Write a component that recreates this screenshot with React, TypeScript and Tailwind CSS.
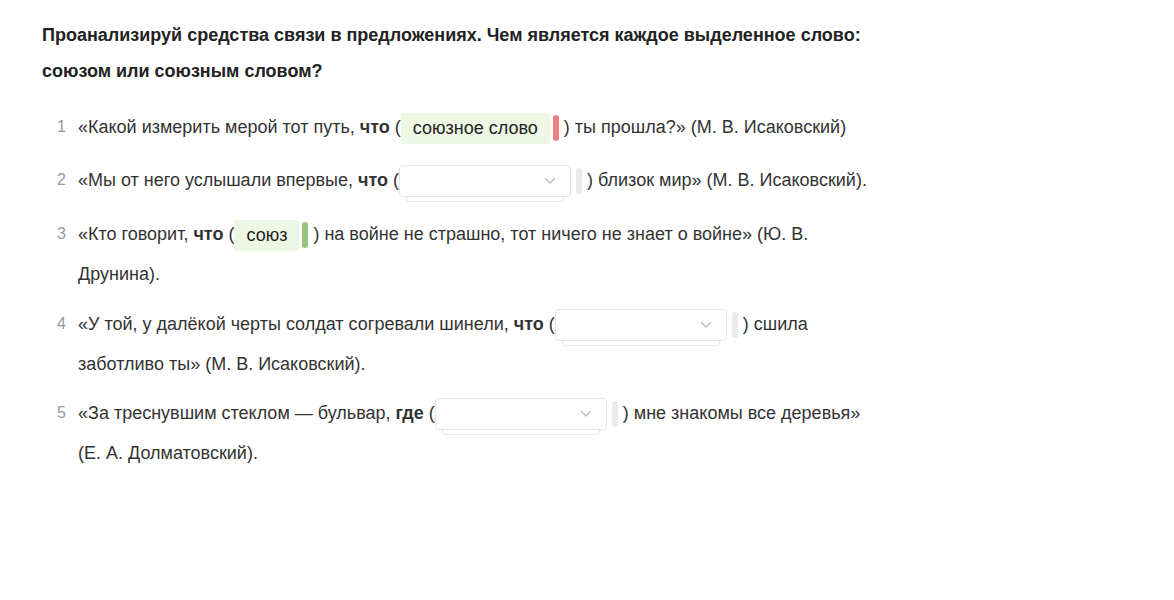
import React from "react";

type Mark = "red" | "green" | "gray";

const barColor: Record<Mark, string> = {
  red: "bg-[#ee8080]",
  green: "bg-[#95c47e]",
  gray: "bg-[#e8eaed]",
};

const Chip = ({ text, mark }: { text: string; mark: Mark }) => (
  <span className="inline-flex items-center align-middle">
    <span className="inline-flex h-[31px] items-center rounded-[3px] bg-[#eef7e3] px-[12px] text-[#222]">
      {text}
    </span>
    <span className={`ml-[3px] inline-block h-[26px] w-[6px] rounded-full ${barColor[mark]}`} />
  </span>
);

const Dropdown = () => (
  <span className="inline-flex items-center align-middle">
    <span className="relative inline-block h-[32px] w-[172px]">
      <span className="absolute bottom-[-5px] left-[7px] right-[7px] h-[10px] rounded-[3px] border border-[#e6e8eb] bg-white" />
      <span className="absolute inset-0 flex items-center justify-end rounded-[4px] border border-[#e3e5e8] bg-white pr-[14px]">
        <svg width="12" height="8" viewBox="0 0 12 8" fill="none">
          <path d="M1.5 1.5 6 6l4.5-4.5" stroke="#b8bcc2" strokeWidth="1.4" strokeLinecap="round" strokeLinejoin="round" />
        </svg>
      </span>
    </span>
    <span className="ml-[5px] inline-block h-[26px] w-[6px] rounded-full bg-[#e8eaed]" />
  </span>
);

const items: { n: number; mb: string; body: React.ReactNode }[] = [
  {
    n: 1,
    mb: "mb-[13px]",
    body: (
      <>
        «Какой измерить мерой тот путь, <b>что</b> (<Chip text="союзное слово" mark="red" />
        <span className="ml-[5px]">) ты прошла?» (М. В. Исаковский)</span>
      </>
    ),
  },
  {
    n: 2,
    mb: "mb-[14px]",
    body: (
      <>
        «Мы от него услышали впервые, <b>что</b> (<Dropdown />
        <span className="ml-[5px]">) близок мир» (М. В. Исаковский).</span>
      </>
    ),
  },
  {
    n: 3,
    mb: "mb-[10px]",
    body: (
      <>
        «Кто говорит, <b>что</b> (<Chip text="союз" mark="green" />
        <span className="ml-[5px]">) на войне не страшно, тот ничего не знает о войне» (Ю. В. Друнина).</span>
      </>
    ),
  },
  {
    n: 4,
    mb: "mb-[9px]",
    body: (
      <>
        «У той, у далёкой черты солдат согревали шинели, <b>что</b> (<Dropdown />
        <span className="ml-[5px]">) сшила заботливо ты» (М. В. Исаковский).</span>
      </>
    ),
  },
  {
    n: 5,
    mb: "",
    body: (
      <>
        «За треснувшим стеклом — бульвар, <b>где</b> (<Dropdown />
        <span className="ml-[5px]">) мне знакомы все деревья» (Е. А. Долматовский).</span>
      </>
    ),
  },
];

export default function App() {
  return (
    <div className="min-h-[600px] w-full bg-white font-['Liberation_Sans',Arial,sans-serif] text-[#333]">
      <div className="w-[872px] pl-[42px] pt-[17px]">
        <h2 className="text-[18px] font-bold leading-[36px] text-[#222]">
          Проанализируй средства связи в предложениях. Чем является каждое выделенное слово: союзом или союзным
          словом?
        </h2>
        <ol className="mt-[18px]">
          {items.map((it) => (
            <li key={it.n} className={`flex ${it.mb}`}>
              <span className="w-[36px] shrink-0 pr-[12px] text-right text-[16px] leading-[40px] text-[#999]">
                {it.n}
              </span>
              <div className="w-[794px] text-[18px] leading-[40px]">{it.body}</div>
            </li>
          ))}
        </ol>
      </div>
    </div>
  );
}
